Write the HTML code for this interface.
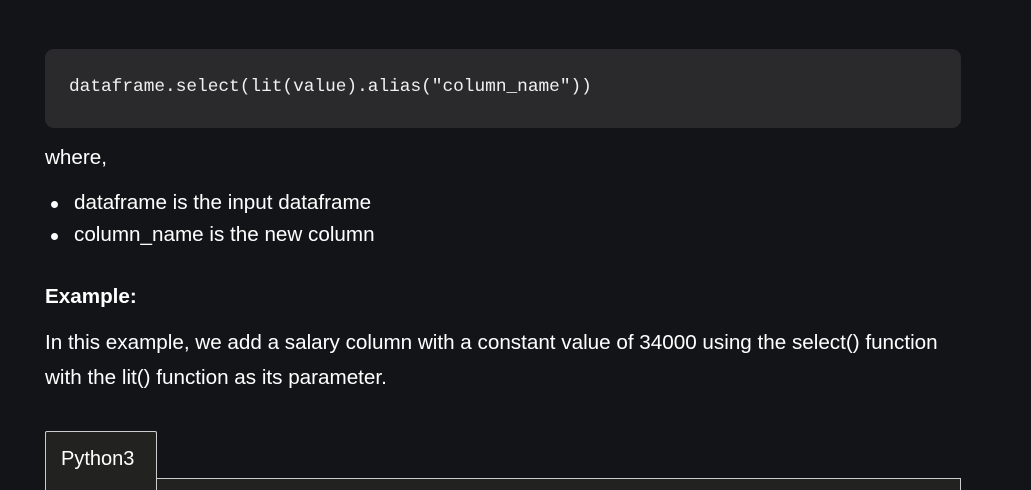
<!DOCTYPE html>
<html><head><style>
html,body{margin:0;height:490px;overflow:hidden}
body{background:#131417;width:1031px;position:relative;font-family:"Liberation Sans",sans-serif;color:#fff}
.code{position:absolute;left:45px;top:49px;width:916px;height:79px;background:#2a2a2d;border-radius:9px}
.code span{position:absolute;left:24px;top:28px;font-family:"Liberation Mono",monospace;font-size:17.8px;color:#f0f0f0}
.t{position:absolute;left:45px;font-size:20.65px;white-space:nowrap}
.b{position:absolute;left:51px;width:7px;height:7px;border-radius:50%;background:#fff}
.tab{position:absolute;left:45px;top:431px;width:110px;height:70px;background:#222220;border:1px solid #ccc;border-bottom:none;border-radius:2px 2px 0 0}
.tab span{position:absolute;left:15px;top:16px;font-size:20px}
.panel{position:absolute;left:155px;top:478px;width:805px;height:30px;background:#222220;border-top:1px solid #ccc;border-right:1px solid #ccc}
</style></head><body>
<div class="code"><span>dataframe.select(lit(value).alias("column_name"))</span></div>
<div class="t" style="top:146px">where,</div>
<div class="b" style="top:201px"></div><div class="t" style="left:74px;top:191px">dataframe is the input dataframe</div>
<div class="b" style="top:233px"></div><div class="t" style="left:74px;top:223px">column_name is the new column</div>
<div class="t" style="top:285px;font-weight:bold">Example:</div>
<div class="t" style="top:331px">In this example, we add a salary column with a constant value of 34000 using the select() function</div>
<div class="t" style="top:366px">with the lit() function as its parameter.</div>
<div class="panel"></div>
<div class="tab"><span>Python3</span></div>
</body></html>
